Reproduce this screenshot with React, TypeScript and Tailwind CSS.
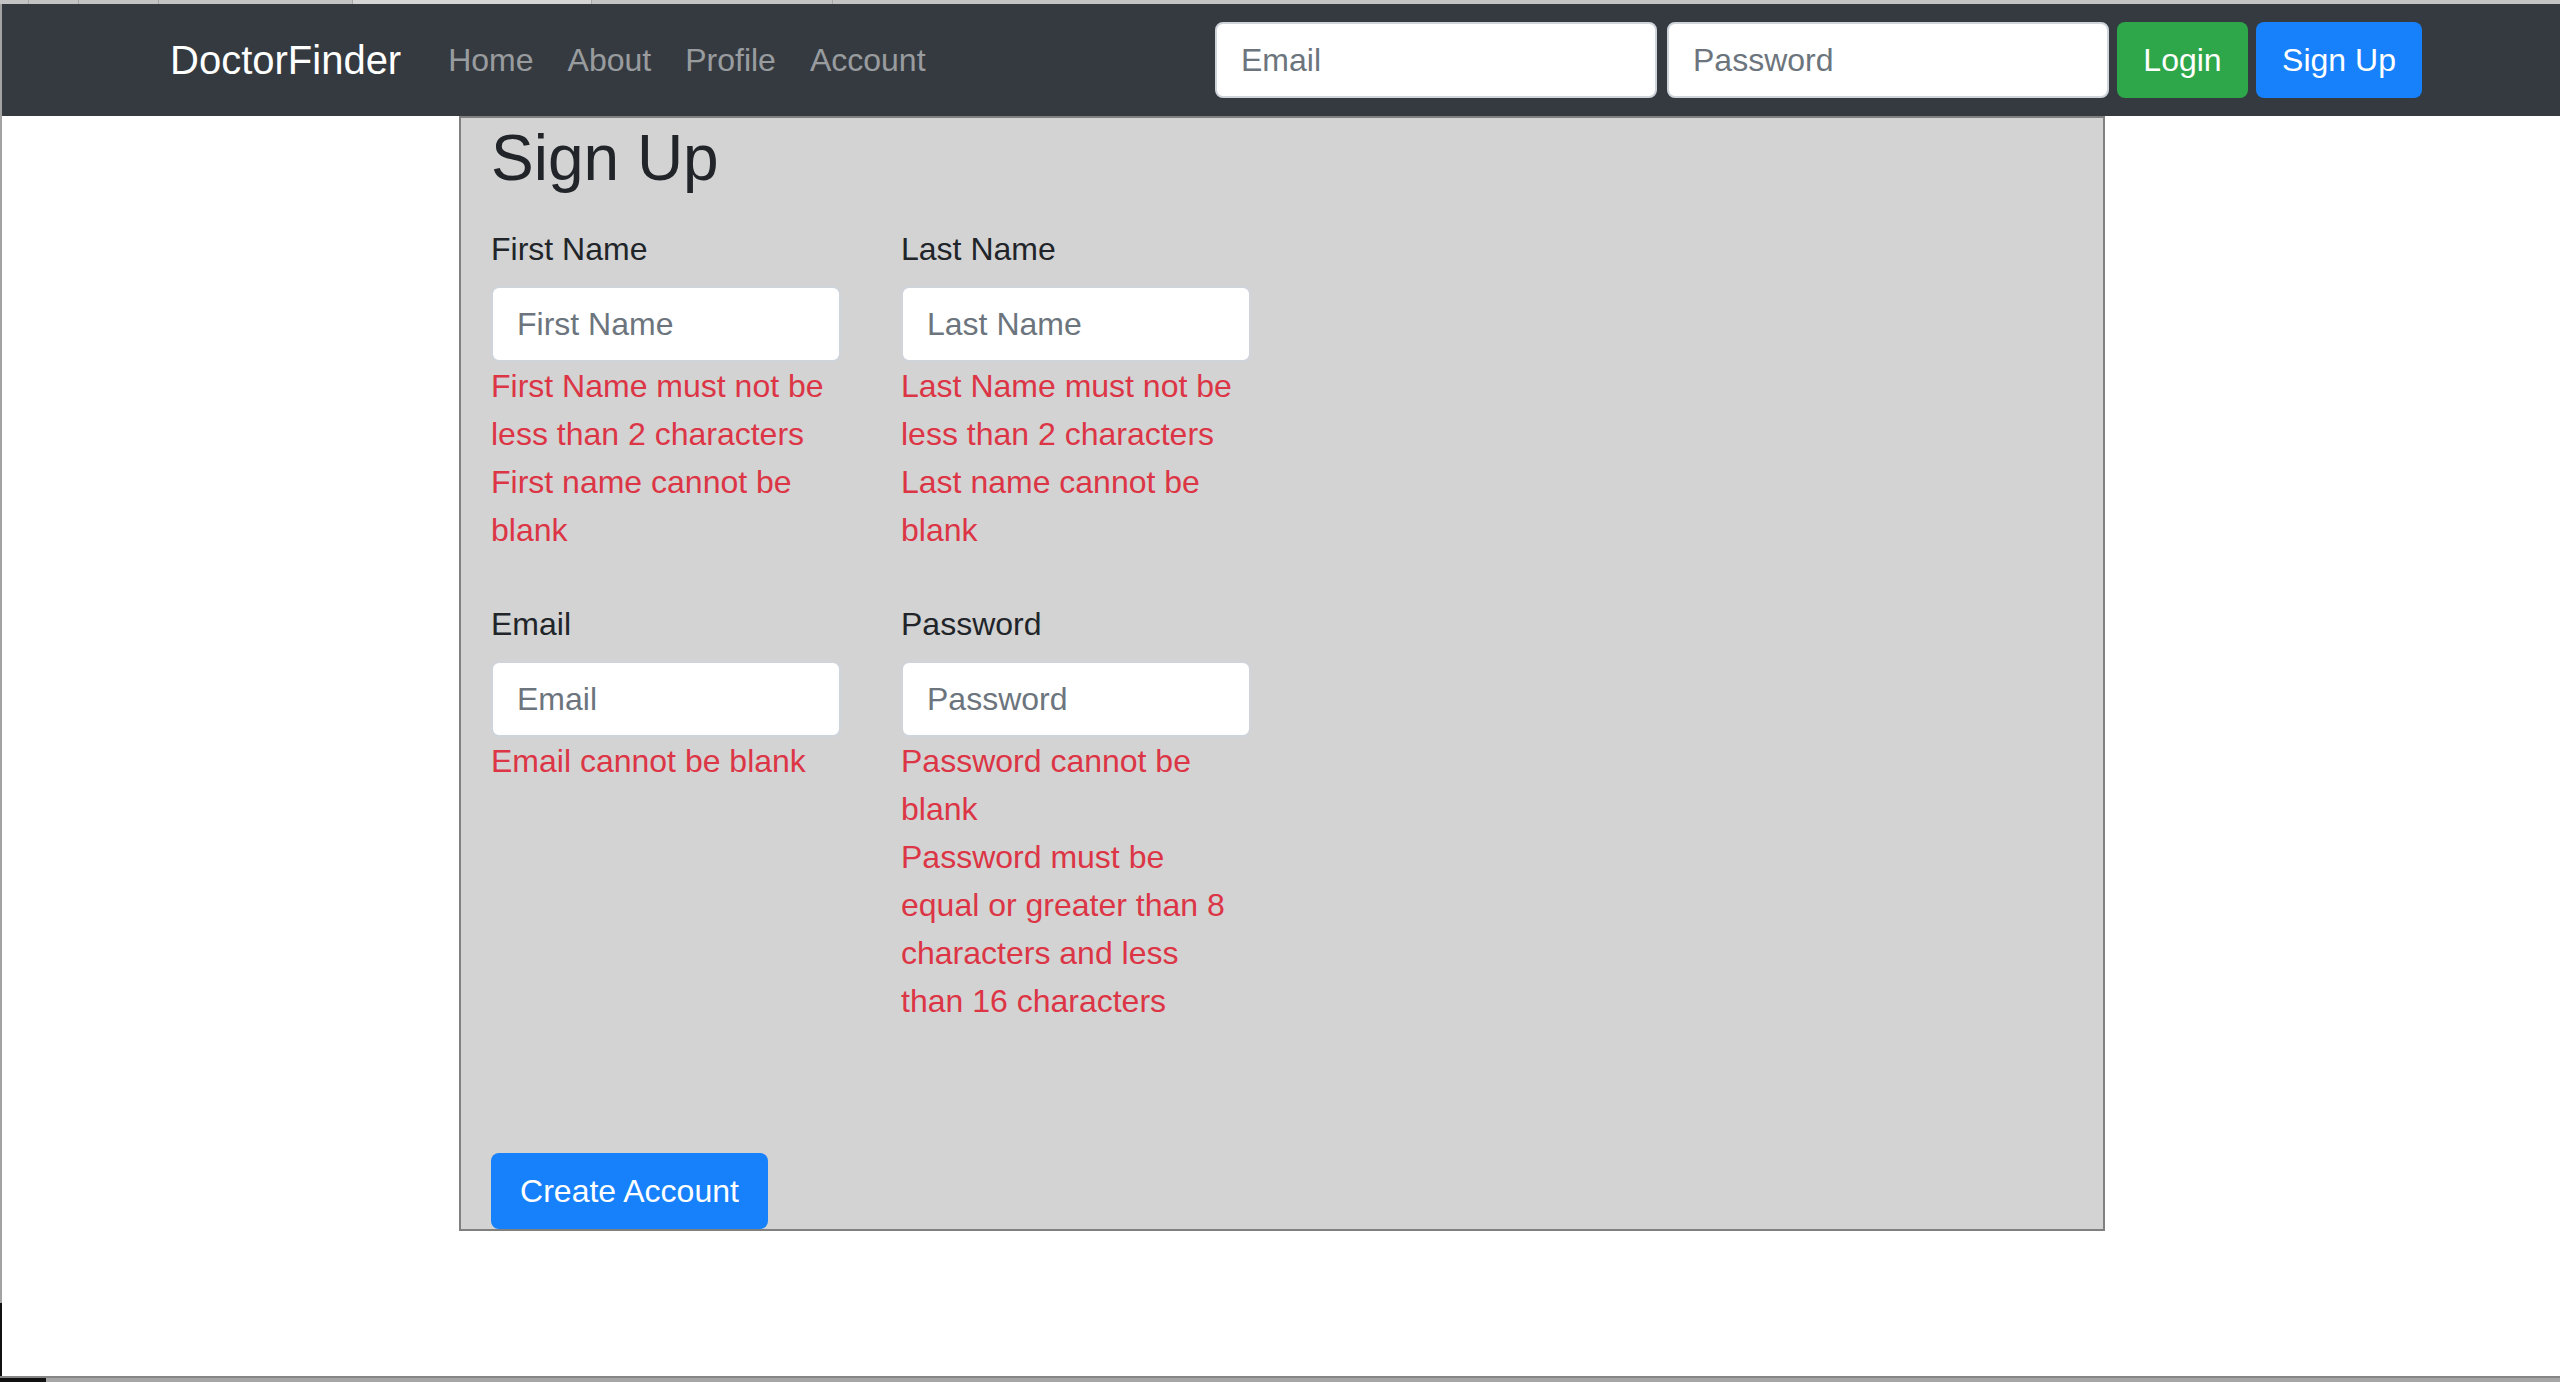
import React from "react";

const Line = ({ children }: { children: React.ReactNode }) => (
  <div className="whitespace-nowrap">{children}</div>
);

function Field({
  label,
  placeholder,
  type,
  errors,
}: {
  label: string;
  placeholder: string;
  type: string;
  errors: string[];
}) {
  return (
    <div className="flex flex-col w-[350px]">
      <label className="text-[32px] leading-[48px] text-[#212529]">{label}</label>
      <input
        type={type}
        placeholder={placeholder}
        className="mt-[13px] h-[76px] w-[350px] rounded-[8px] border-2 border-[#ced4da] bg-white px-[24px] text-[32px] text-[#495057] placeholder:text-[#6c757d] outline-none"
      />
      <div className="text-[32px] leading-[48px] text-[#dc3545]">
        {errors.map((e, i) => (
          <Line key={i}>{e}</Line>
        ))}
      </div>
    </div>
  );
}

export default function App() {
  return (
    <div className="w-[2560px] h-[1382px] flex flex-col bg-white overflow-hidden font-['Liberation_Sans',Arial,sans-serif]">
      {/* window top strip */}
      <div className="h-[4px] flex bg-[#c4c4c4]">
        <div className="w-[29px] border-r border-[#a8a8a8]" />
        <div className="w-[50px] border-r border-[#a8a8a8]" />
        <div className="w-[80px] border-r border-[#a8a8a8]" />
        <div className="w-[194px] border-r border-[#a8a8a8]" />
        <div className="w-[239px] bg-[#d6d6d6] border-r border-[#a8a8a8]" />
        <div className="w-[241px] border-r border-[#a8a8a8]" />
        <div className="flex-1" />
      </div>

      <div className="flex-1 flex">
        {/* window left edge */}
        <div className="w-[2px] flex flex-col bg-[#a3a3a3]">
          <div className="flex-1" />
          <div className="h-[73px] bg-[#111111]" />
        </div>

        <div className="flex-1 flex flex-col">
          {/* navbar */}
          <nav className="h-[112px] bg-[#343a40] flex items-center justify-between pl-[168px] pr-[138px]">
            <div className="flex items-center">
              <a className="text-[40px] leading-[60px] text-white mr-[30px]">DoctorFinder</a>
              <div className="flex items-center text-[32px] leading-[48px] text-[rgba(255,255,255,0.5)]">
                <a className="px-[17px]">Home</a>
                <a className="px-[17px]">About</a>
                <a className="px-[17px]">Profile</a>
                <a className="px-[17px]">Account</a>
              </div>
            </div>
            <div className="flex items-center">
              <input
                type="email"
                placeholder="Email"
                className="h-[76px] w-[442px] rounded-[8px] border-2 border-[#ced4da] bg-white px-[24px] text-[32px] placeholder:text-[#6c757d] outline-none"
              />
              <input
                type="password"
                placeholder="Password"
                className="ml-[10px] h-[76px] w-[442px] rounded-[8px] border-2 border-[#ced4da] bg-white px-[24px] text-[32px] placeholder:text-[#6c757d] outline-none"
              />
              <button className="ml-[8px] h-[76px] w-[131px] rounded-[8px] bg-[#2ea64a] text-[32px] text-white">
                Login
              </button>
              <button className="ml-[8px] h-[76px] w-[166px] rounded-[8px] bg-[#1681fb] text-[32px] text-white">
                Sign Up
              </button>
            </div>
          </nav>

          {/* main */}
          <main className="flex-1">
            <div className="ml-[457px] w-[1646px] border-2 border-[#808080] bg-[#d3d3d3] px-[30px]">
              <h1 className="text-[64px] leading-[80px] text-[#212529]">Sign Up</h1>
              <div className="mt-[27px] flex gap-[60px]">
                <Field
                  label="First Name"
                  placeholder="First Name"
                  type="text"
                  errors={[
                    "First Name must not be",
                    "less than 2 characters",
                    "First name cannot be",
                    "blank",
                  ]}
                />
                <Field
                  label="Last Name"
                  placeholder="Last Name"
                  type="text"
                  errors={[
                    "Last Name must not be",
                    "less than 2 characters",
                    "Last name cannot be",
                    "blank",
                  ]}
                />
              </div>
              <div className="mt-[46px] flex items-start gap-[60px]">
                <Field
                  label="Email"
                  placeholder="Email"
                  type="email"
                  errors={["Email cannot be blank"]}
                />
                <Field
                  label="Password"
                  placeholder="Password"
                  type="password"
                  errors={[
                    "Password cannot be",
                    "blank",
                    "Password must be",
                    "equal or greater than 8",
                    "characters and less",
                    "than 16 characters",
                  ]}
                />
              </div>
              <div className="mt-[128px] flex">
                <button className="h-[76px] w-[277px] rounded-[8px] bg-[#1681fb] text-[32px] text-white">
                  Create Account
                </button>
              </div>
            </div>
          </main>
        </div>
      </div>

      {/* window bottom strip */}
      <div className="h-[6px] flex border-t-2 border-[#858585] bg-[#a6a6a6]">
        <div className="w-[46px] bg-[#111111]" />
        <div className="flex-1" />
      </div>
    </div>
  );
}
